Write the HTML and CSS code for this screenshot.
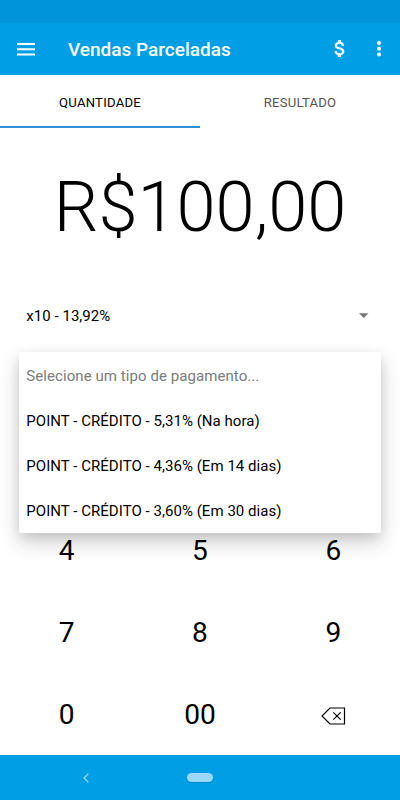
FILE: index.html
```html
<!DOCTYPE html>
<html lang="pt-BR">
<head>
<meta charset="utf-8">
<title>Vendas Parceladas</title>
<link rel="stylesheet" href="styles.css">
</head>
<body>
<div class="screen">
  <div class="status-bar"></div>
  <header class="toolbar">
    <svg class="icon-menu" viewBox="0 0 18 13" width="18" height="13"><path d="M0 1h18M0 6.2h18M0 11.4h18" stroke="#fff" stroke-width="2"/></svg>
    <h1 class="title">Vendas Parceladas</h1>
    <svg class="icon-money" viewBox="6 3 12 18" width="12" height="17"><path fill="#fff" stroke="#fff" stroke-width=".3" d="M11.8 10.9c-2.27-.59-3-1.2-3-2.15 0-1.09 1.01-1.85 2.7-1.85 1.78 0 2.44.85 2.5 2.1h2.21c-.07-1.72-1.12-3.3-3.21-3.81V3h-3v2.16c-1.94.42-3.5 1.68-3.5 3.61 0 2.31 1.91 3.46 4.7 4.13 2.5.6 3 1.48 3 2.41 0 .69-.49 1.79-2.7 1.79-2.06 0-2.87-.92-2.98-2.1h-2.2c.12 2.19 1.76 3.42 3.68 3.83V21h3v-2.15c1.95-.37 3.5-1.5 3.5-3.55 0-2.84-2.43-3.81-4.7-4.4z"/></svg>
    <svg class="icon-more" viewBox="0 0 4 16" width="4" height="16"><g fill="#fff"><circle cx="2" cy="2" r="2"/><circle cx="2" cy="7.7" r="2"/><circle cx="2" cy="13.4" r="2"/></g></svg>
  </header>
  <nav class="tabs">
    <div class="tab tab-active">QUANTIDADE</div>
    <div class="tab">RESULTADO</div>
  </nav>
  <main class="content">
    <div class="amount">R$100,00</div>
    <div class="spinner">
      <span class="selected">x10 - 13,92%</span>
      <svg viewBox="0 0 10 5" width="9.5" height="5"><path d="M0 0h10L5 5z" fill="#757575"/></svg>
      <ul class="dropdown">
        <li class="hint">Selecione um tipo de pagamento...</li>
        <li>POINT - CRÉDITO - 5,31% (Na hora)</li>
        <li>POINT - CRÉDITO - 4,36% (Em 14 dias)</li>
        <li>POINT - CRÉDITO - 3,60% (Em 30 dias)</li>
      </ul>
    </div>
    <div class="keypad">
      <div>4</div><div>5</div><div>6</div>
      <div>7</div><div>8</div><div>9</div>
      <div>0</div><div>00</div>
      <div><svg class="icon-erase" viewBox="0 0 25 18" width="25" height="18"><path d="M9 1h14.5v16H9L1 9zM12.3 5.3l7.4 7.4M19.7 5.3l-7.4 7.4" fill="none" stroke="#000" stroke-width="1.2"/></svg></div>
    </div>
  </main>
  <footer class="nav-bar">
    <svg class="icon-back" viewBox="0 0 6 10" width="6" height="10"><path d="M5.3.8L1 5l4.3 4.2" fill="none" stroke="#a3dbf6" stroke-width="1.2"/></svg>
    <span class="home-pill"></span>
  </footer>
</div>
</body>
</html>
```
FILE: styles.css
```css
* { box-sizing: border-box; }
body {
  margin: 0;
  font-family: Roboto, "Liberation Sans", sans-serif;
  color: #000;
  background: #fff;
}
svg { display: block; flex: none; }
.screen {
  display: flex;
  flex-direction: column;
  width: 400px;
  height: 800px;
  overflow: hidden;
}
.status-bar { height: 22.5px; background: #0095da; }
.toolbar {
  display: flex;
  align-items: center;
  height: 52.8px;
  padding: 0 19px 0 17px;
  background: #009fe5;
}
.icon-menu { margin-top: 1px; }
.title {
  flex: 1;
  margin: 2px 0 0 33px;
  font-size: 19px;
  font-weight: 500;
  line-height: 24px;
  color: #fff;
}
.icon-money { margin: -1px 31px 0 0; }
.icon-more { margin-top: 1px; }
.tabs { display: flex; height: 52.7px; }
.tab {
  display: flex;
  flex: 1;
  align-items: center;
  justify-content: center;
  padding-top: 4px;
  border-bottom: 2px solid transparent;
  font-size: 13.1px;
  letter-spacing: .24px;
  color: #555;
}
.tab-active { color: #000; border-bottom-color: #2f8fd8; }
.content { display: flex; flex: 1; flex-direction: column; }
.amount {
  height: 158px;
  font-size: 70.4px;
  font-weight: 300;
  line-height: 158px;
  text-align: center;
}
.spinner {
  position: relative;
  display: flex;
  align-items: center;
  justify-content: space-between;
  height: 60px;
  padding: 0 31.5px 0 26.3px;
  font-size: 15px;
  letter-spacing: .04px;
}
.dropdown {
  position: absolute;
  top: 66px;
  left: 19px;
  width: 362px;
  height: 181px;
  margin: 0;
  padding: 2px 0 0;
  list-style: none;
  border-radius: 2px;
  background: #fff;
  box-shadow: 0 9px 20px rgba(0, 0, 0, .2), 0 3px 12px rgba(0, 0, 0, .08);
}
.dropdown li { height: 45px; padding-left: 7.3px; line-height: 44px; }
.dropdown .hint { color: #7b7b7b; letter-spacing: .07px; }
.keypad {
  display: grid;
  grid-template-columns: repeat(3, 1fr);
  grid-auto-rows: 82.4px;
  margin-top: auto;
  font-size: 28.1px;
}
.keypad div { display: flex; align-items: center; justify-content: center; padding-top: 2px; }
.icon-erase { margin-top: 3px; }
.nav-bar {
  display: flex;
  align-items: center;
  height: 45px;
  padding-left: 83px;
  background: #009fe5;
}
.home-pill {
  width: 26px;
  height: 9px;
  margin-left: 98px;
  border-radius: 5px;
  background: #9bd8f5;
  box-shadow: 0 1px 1px rgba(0, 0, 0, .12);
}
```
